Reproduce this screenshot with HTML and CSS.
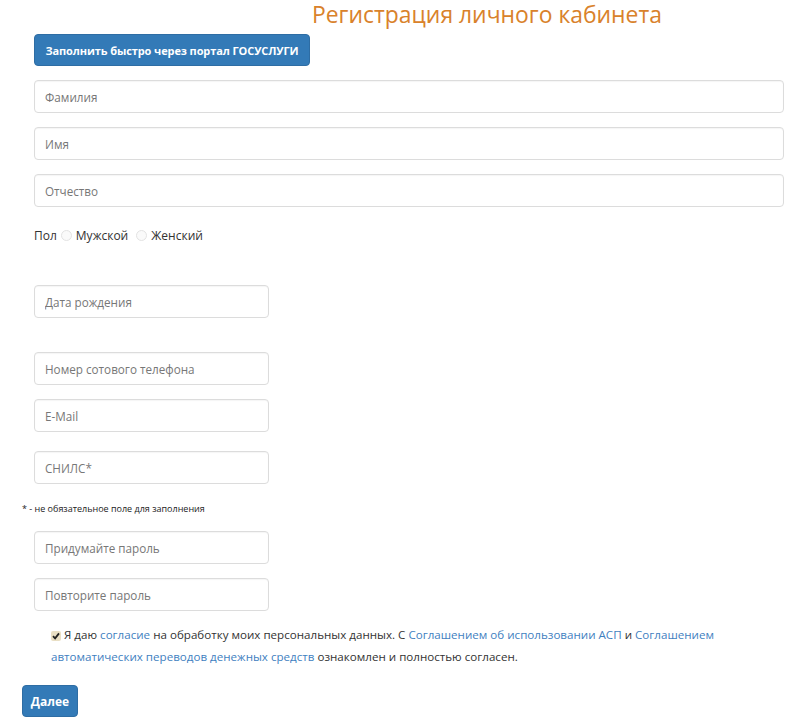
FILE: index.html
```html
<!DOCTYPE html>
<html lang="ru">
<head>
<meta charset="utf-8">
<title>Регистрация личного кабинета</title>
<link rel="stylesheet" href="styles.css">
</head>
<body>
<div class="page">
  <h1 class="title">Регистрация личного кабинета</h1>
  <div class="group">
    <button class="btn btn-gos" type="button">Заполнить быстро через портал ГОСУСЛУГИ</button>
  </div>
  <div class="group wide">
    <input class="field" type="text" placeholder="Фамилия">
    <input class="field" type="text" placeholder="Имя">
    <input class="field" type="text" placeholder="Отчество">
  </div>
  <div class="group gender">
    <span>Пол</span>
    <label class="radio"><span class="radio-dot"></span>Мужской</label>
    <label class="radio"><span class="radio-dot"></span>Женский</label>
  </div>
  <div class="group narrow date">
    <input class="field" type="text" placeholder="Дата рождения">
  </div>
  <div class="group narrow contacts">
    <input class="field" type="text" placeholder="Номер сотового телефона">
    <input class="field" type="text" placeholder="E-Mail">
    <input class="field snils" type="text" placeholder="СНИЛС*">
  </div>
  <p class="note">* - не обязательное поле для заполнения</p>
  <div class="group narrow passwords">
    <input class="field" type="password" placeholder="Придумайте пароль">
    <input class="field" type="password" placeholder="Повторите пароль">
  </div>
  <div class="agree">
    <span class="check"><svg width="8" height="8" viewBox="0 0 8 8"><path d="M1 4.2 L3.1 6.4 L7 1.4" fill="none" stroke="#222" stroke-width="1.8"/></svg></span>Я даю <a href="#">согласие</a> на обработку моих персональных данных. С <a href="#">Соглашением об использовании АСП</a> и <a href="#">Соглашением автоматических переводов денежных средств</a> ознакомлен и полностью согласен.
  </div>
  <div class="actions">
    <button class="btn btn-next" type="button">Далее</button>
  </div>
</div>
</body>
</html>
```
FILE: styles.css
```css
* { box-sizing: border-box; }
html, body { margin: 0; padding: 0; background: #fff; }
body {
  font-family: "Open Sans", "Liberation Sans", sans-serif;
  color: #333;
  font-size: 12px;
}
.page {
  width: 800px;
  height: 728px;
  padding-left: 22px;
  display: flex;
  flex-direction: column;
}
.title {
  margin: 0 0 4px 290px;
  font-size: 22.9px;
  line-height: 30px;
  height: 30px;
  font-weight: 400;
  color: #d9822b;
  white-space: nowrap;
}
.group {
  padding-left: 12px;
  display: flex;
  flex-direction: column;
  gap: 14px;
}
.btn {
  font-family: "Open Sans", "Liberation Sans", sans-serif;
  border: 1px solid #2e6da4;
  background: #337ab7;
  color: #fff;
  font-weight: 700;
  border-radius: 4px;
  cursor: pointer;
}
.btn-gos {
  align-self: flex-start;
  height: 32px;
  width: 276px;
  padding: 0 8px;
  font-size: 11px;
  letter-spacing: -0.1px;
}
.wide { margin-top: 14px; width: 762px; }
.field {
  display: block;
  height: 33px;
  width: 100%;
  border: 1px solid #dcdcdc;
  border-radius: 4px;
  padding: 0 10px;
  font-family: "Open Sans", "Liberation Sans", sans-serif;
  font-size: 11.7px;
  color: #555;
  box-shadow: inset 0 1px 1px rgba(0,0,0,0.04);
}
.field::placeholder { color: #777; }
.narrow { width: 247px; }
.gender {
  flex-direction: row;
  align-items: center;
  gap: 4px;
  margin-top: 18px;
  height: 20px;
  font-size: 12px;
  color: #333;
}
.radio {
  display: flex;
  align-items: center;
  gap: 4px;
  margin-right: 4px;
}
.radio-dot {
  width: 11px;
  height: 11px;
  border-radius: 50%;
  border: 1px solid #e3e3e3;
  background: #fafafa;
}
.date { margin-top: 40px; }
.contacts { margin-top: 34px; }
.contacts .snils { margin-top: 5px; }
.note {
  margin: 19px 0 0;
  font-size: 9px;
  line-height: 12px;
  color: #222;
}
.passwords { margin-top: 16px; }
.agree {
  margin: 13px 0 0 29px;
  width: 700px;
  font-size: 11.6px;
  line-height: 22px;
  color: #333;
}
.agree a { color: #3f7fbf; text-decoration: none; }
.check {
  display: inline-flex;
  align-items: center;
  justify-content: center;
  width: 10px;
  height: 10px;
  background: #e9dfc4;
  border-radius: 2px;
  margin-right: 3px;
  vertical-align: -1px;
}
.actions { margin-top: 17px; }
.btn-next {
  height: 32px;
  width: 56px;
  padding: 0;
  font-size: 12px;
}
```
